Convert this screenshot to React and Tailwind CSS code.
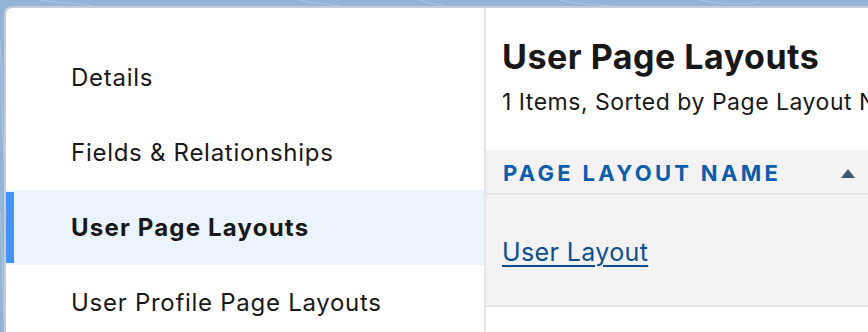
import React from "react";

const navItems = [
  { label: "Details" },
  { label: "Fields & Relationships" },
  { label: "User Page Layouts", active: true },
  { label: "User Profile Page Layouts" },
];

// Faint contour lines on the blue backdrop
function Backdrop() {
  return (
    <svg className="absolute inset-0" width="868" height="332" viewBox="0 0 868 332">
      <g fill="none" stroke="#ffffff" strokeOpacity="0.25" strokeWidth="1">
        <path d="M40 0 C 60 4, 80 2, 100 8" />
        <path d="M300 0 C 320 6, 330 2, 345 8" />
        <path d="M420 0 C 430 5, 440 3, 450 8" />
        <path d="M560 0 C 580 6, 600 3, 620 8" />
        <path d="M700 0 C 720 4, 740 6, 760 2" />
        <path d="M0 40 C 3 80, 1 120, 4 160" />
        <path d="M0 210 C 3 240, 2 280, 4 320" />
      </g>
    </svg>
  );
}

export default function App() {
  return (
    <div
      className="relative w-[868px] h-[332px] overflow-hidden bg-[#94b3d8]"
      style={{ fontFamily: "Inter, 'Noto Sans', sans-serif" }}
    >
      <Backdrop />
      <div className="relative ml-[4px] mt-[6px] h-[326px] w-[864px] border-l-2 border-t-2 border-[#c6ccd4] rounded-tl-[8px] bg-white overflow-hidden flex">
        {/* Left nav */}
        <nav className="w-[478px] shrink-0 pt-[32px] flex flex-col">
          {navItems.map((item) =>
            item.active ? (
              <div
                key={item.label}
                className="h-[75px] shrink-0 bg-[#ebf3fd] flex items-center"
              >
                <div className="w-[8px] h-[71px] bg-[#4393f8]" />
                <span className="pl-[57px] text-[24px] font-bold tracking-[0.05em] text-[#181818] whitespace-nowrap">
                  {item.label}
                </span>
              </div>
            ) : (
              <div key={item.label} className="h-[75px] shrink-0 flex items-center pl-[65px]">
                <span className="text-[24px] tracking-[0.03em] text-[#181818] whitespace-nowrap">
                  {item.label}
                </span>
              </div>
            )
          )}
        </nav>

        {/* Right panel */}
        <section className="flex-1 border-l-2 border-[#e5e5e5] pt-[29px] min-w-0 overflow-hidden">
          <div className="pl-[16px]">
            <h1 className="text-[34px] leading-[40px] font-bold tracking-[0.015em] text-[#181818] whitespace-nowrap">
              User Page Layouts
            </h1>
            <p className="mt-[13px] text-[23px] leading-[24px] tracking-[0.022em] text-[#181818] whitespace-nowrap">
              1 Items, Sorted by Page Layout Name
            </p>
          </div>

          <div className="mt-[36px] bg-[#f3f3f3] h-[45px] border-b-2 border-[#e5e5e5] flex items-center justify-between pl-[17px] pr-[13px] pt-[4px]">
            <span className="text-[22px] font-bold tracking-[0.15em] text-[#0b5cab] whitespace-nowrap">
              PAGE LAYOUT NAME
            </span>
            <svg width="14" height="9" viewBox="0 0 14 9">
              <path d="M7 0 L14 9 L0 9 Z" fill="#3e5670" />
            </svg>
          </div>

          <div className="bg-[#f3f3f3] h-[112px] border-b-2 border-[#e5e5e5] flex items-center pl-[16px] pt-[6px]">
            <a
              href="#"
              className="text-[25px] tracking-[0.015em] text-[#0b4f91] underline underline-offset-[4px] decoration-2 whitespace-nowrap"
            >
              User Layout
            </a>
          </div>
        </section>
      </div>
    </div>
  );
}
